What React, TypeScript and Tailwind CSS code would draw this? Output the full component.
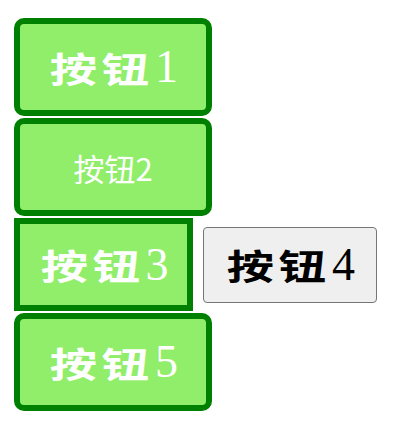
import React from "react";

const cjk = '"Noto Sans CJK SC", "Noto Sans CJK JP", sans-serif';

function Label({ n, color }: { n: string; color: string }) {
  return (
    <span className={`flex items-center ${color}`}>
      <span className="inline-flex w-[52px] justify-center">
        <span
          className="inline-block scale-x-[1.35] text-[35px] font-bold leading-none"
          style={{ fontFamily: cjk }}
        >
          按
        </span>
      </span>
      <span className="inline-flex w-[52px] justify-center">
        <span
          className="inline-block scale-x-[1.35] text-[35px] font-bold leading-none"
          style={{ fontFamily: cjk }}
        >
          钮
        </span>
      </span>
      <span
        className="ml-[3px] text-[46px] font-normal leading-none"
        style={{ fontFamily: '"Liberation Serif", "DejaVu Serif", serif' }}
      >
        {n}
      </span>
    </span>
  );
}

export default function App() {
  return (
    <div className="flex flex-col items-start gap-[2px] bg-white pl-[14px] pt-[18px]">
      <button className="flex h-[98px] w-[198px] items-center justify-center rounded-[10px] border-[6px] border-[#008000] bg-[#90ee6a]">
        <Label n="1" color="text-white" />
      </button>
      <button className="flex h-[98px] w-[198px] items-center justify-center rounded-[10px] border-[6px] border-[#008000] bg-[#90ee6a]">
        <span
          className="text-[31px] font-normal leading-none text-white"
          style={{ fontFamily: '"Noto Sans CJK SC", "Liberation Sans", sans-serif' }}
        >
          按钮2
        </span>
      </button>
      <div className="flex items-center gap-[10px]">
        <button className="flex h-[93px] w-[179px] items-center justify-center border-[6px] border-[#008000] bg-[#90ee6a]">
          <Label n="3" color="text-white" />
        </button>
        <button className="flex h-[76px] w-[174px] items-center justify-center rounded-[4px] border border-[#767676] bg-[#efefef]">
          <Label n="4" color="text-black" />
        </button>
      </div>
      <button className="flex h-[98px] w-[198px] items-center justify-center rounded-[10px] border-[6px] border-[#008000] bg-[#90ee6a]">
        <Label n="5" color="text-white" />
      </button>
    </div>
  );
}
